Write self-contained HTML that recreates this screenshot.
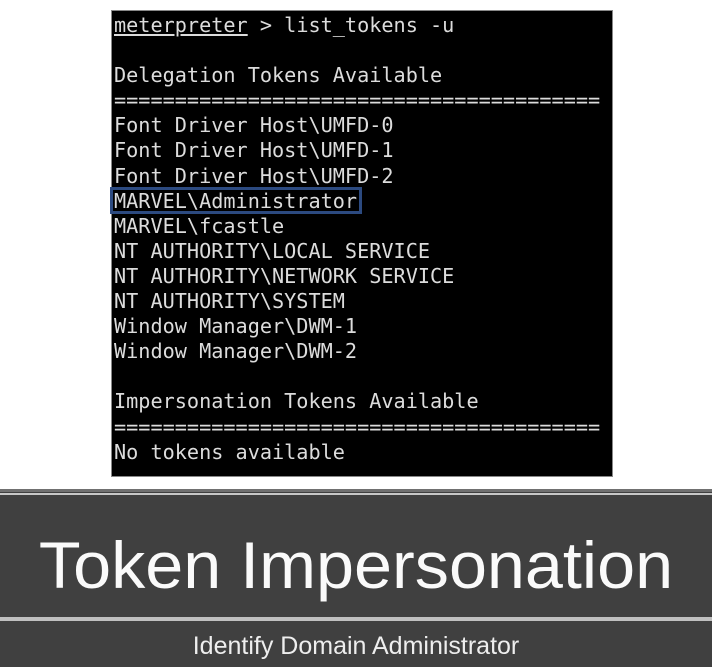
<!DOCTYPE html>
<html><head><style>
*{margin:0;padding:0}
body{width:712px;height:667px;background:#fff;position:relative;overflow:hidden}
#term{position:absolute;left:111px;top:10px;width:502px;height:467px;background:#000;border:1px solid #888;box-sizing:border-box}
pre{position:absolute;left:2px;top:2px;font-family:"DejaVu Sans Mono","Liberation Mono",monospace;font-size:20.2px;line-height:25.1px;color:#dcdcdc;white-space:pre}
#hl{position:absolute;left:110px;top:187px;width:252px;height:27px;border:3px solid #2c4a80;box-sizing:border-box}
#band{position:absolute;left:0;top:489px;width:712px;height:178px;background:#404040}
#l1{position:absolute;left:0;top:489px;width:712px;height:3px;background:#707070}
#l2{position:absolute;left:0;top:493px;width:712px;height:2px;background:#c8c8c8}
#l3{position:absolute;left:0;top:617px;width:712px;height:4px;background:#c0c0c0}
#title{position:absolute;left:0;top:520px;width:712px;text-align:center;font-family:"Liberation Sans",sans-serif;font-size:66px;color:#fafafa;line-height:90px;transform:scaleX(1.035)}
#sub{position:absolute;left:0;top:630px;width:712px;text-align:center;font-family:"Liberation Sans",sans-serif;font-size:25px;color:#eee;line-height:32px}
</style></head><body>
<div id="term"><pre><u>meterpreter</u> &gt; list_tokens -u

Delegation Tokens Available
========================================
Font Driver Host\UMFD-0
Font Driver Host\UMFD-1
Font Driver Host\UMFD-2
MARVEL\Administrator
MARVEL\fcastle
NT AUTHORITY\LOCAL SERVICE
NT AUTHORITY\NETWORK SERVICE
NT AUTHORITY\SYSTEM
Window Manager\DWM-1
Window Manager\DWM-2

Impersonation Tokens Available
========================================
No tokens available</pre></div>
<div id="hl"></div>
<div id="band"></div><div id="l1"></div><div id="l2"></div><div id="l3"></div>
<div id="title">Token Impersonation</div>
<div id="sub">Identify Domain Administrator</div>
</body></html>
